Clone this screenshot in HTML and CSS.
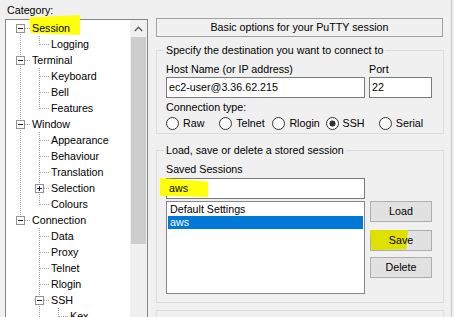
FILE: index.html
```html
<!DOCTYPE html>
<html lang="en">
<head>
  <meta charset="UTF-8">
  <title>PuTTY Configuration</title>
  <link rel="stylesheet" href="styles.css">
</head>
<body>
  <div class="dialog">
    <div class="category">
      <div class="cat-label">Category:</div>
      <div class="tree">
        <div class="tree-items">
          <div class="row"><span class="cell first"><span class="box minus"></span></span><span class="label over">Session</span></div>
          <div class="row"><span class="cell pipe"></span><span class="cell elbow"></span><span class="label">Logging</span></div>
          <div class="row"><span class="cell tee"><span class="box minus"></span></span><span class="label">Terminal</span></div>
          <div class="row"><span class="cell pipe"></span><span class="cell tee"></span><span class="label">Keyboard</span></div>
          <div class="row"><span class="cell pipe"></span><span class="cell tee"></span><span class="label">Bell</span></div>
          <div class="row"><span class="cell pipe"></span><span class="cell elbow"></span><span class="label">Features</span></div>
          <div class="row"><span class="cell tee"><span class="box minus"></span></span><span class="label">Window</span></div>
          <div class="row"><span class="cell pipe"></span><span class="cell tee"></span><span class="label">Appearance</span></div>
          <div class="row"><span class="cell pipe"></span><span class="cell tee"></span><span class="label">Behaviour</span></div>
          <div class="row"><span class="cell pipe"></span><span class="cell tee"></span><span class="label">Translation</span></div>
          <div class="row"><span class="cell pipe"></span><span class="cell tee"><span class="box plus"></span></span><span class="label">Selection</span></div>
          <div class="row"><span class="cell pipe"></span><span class="cell elbow"></span><span class="label">Colours</span></div>
          <div class="row"><span class="cell elbow"><span class="box minus"></span></span><span class="label">Connection</span></div>
          <div class="row"><span class="cell"></span><span class="cell tee"></span><span class="label">Data</span></div>
          <div class="row"><span class="cell"></span><span class="cell tee"></span><span class="label">Proxy</span></div>
          <div class="row"><span class="cell"></span><span class="cell tee"></span><span class="label">Telnet</span></div>
          <div class="row"><span class="cell"></span><span class="cell tee"></span><span class="label">Rlogin</span></div>
          <div class="row"><span class="cell"></span><span class="cell tee"><span class="box minus"></span></span><span class="label">SSH</span></div>
          <div class="row"><span class="cell"></span><span class="cell pipe"></span><span class="cell tee"></span><span class="label">Kex</span></div>
        </div>
        <div class="scrollbar">
          <div class="sb-up">
            <svg width="9" height="6" viewBox="0 0 9 6"><polyline points="0.8,5 4.5,1.3 8.2,5" fill="none" stroke="#606060" stroke-width="1.5"/></svg>
          </div>
          <div class="sb-thumb"></div>
        </div>
      </div>
    </div>

    <div class="panel">
      <div class="panel-title">Basic options for your PuTTY session</div>

      <div class="group">
        <div class="group-title">Specify the destination you want to connect to</div>
        <div class="host-row">
          <div class="host-col">
            <div class="lbl">Host Name (or IP address)</div>
            <div class="field">ec2-user@3.36.62.215</div>
          </div>
          <div class="port-col">
            <div class="lbl">Port</div>
            <div class="field">22</div>
          </div>
        </div>
        <div class="lbl conn-label">Connection type:</div>
        <div class="radios">
          <div class="radio"><span class="dot"></span>Raw</div>
          <div class="radio"><span class="dot"></span>Telnet</div>
          <div class="radio"><span class="dot"></span>Rlogin</div>
          <div class="radio"><span class="dot checked"></span>SSH</div>
          <div class="radio"><span class="dot"></span>Serial</div>
        </div>
      </div>

      <div class="group sessions">
        <div class="group-title">Load, save or delete a stored session</div>
        <div class="lbl saved-label">Saved Sessions</div>
        <div class="field saved-field"><span class="over">aws</span></div>
        <div class="session-row">
          <div class="listbox">
            <div class="list-item">Default Settings</div>
            <div class="list-item selected">aws</div>
          </div>
          <div class="buttons">
            <div class="btn">Load</div>
            <div class="btn save"><span class="over">Save</span></div>
            <div class="btn delete">Delete</div>
          </div>
        </div>
      </div>

      <div class="group last"></div>
    </div>

    <div class="frame-edge"></div>
  </div>

  <span class="marker mark-session"></span>
  <span class="marker mark-aws"></span>
  <span class="marker mark-save"></span>
</body>
</html>
```

FILE: styles.css
```css
body {
  margin: 0;
  position: relative;
  width: 454px;
  height: 317px;
  overflow: hidden;
  background-color: #f0f0f0;
  font-family: 'Liberation Sans', Arial, sans-serif;
  font-size: 10.7px;
  color: #000;
}
.dialog {
  display: flex;
  height: 317px;
  padding-left: 5px;
}
.category {
  width: 143px;
  flex: none;
}
.cat-label {
  padding: 3px 0 0 2px;
  line-height: 15px;
}
.tree {
  margin-top: 1px;
  height: 298px;
  border: 1px solid #828790;
  border-bottom: none;
  background-color: #fff;
  display: flex;
  box-sizing: border-box;
  overflow: hidden;
}
.tree-items {
  flex: 1;
  padding-left: 5px;
}
.row {
  display: flex;
  height: 16px;
}
.cell {
  --v: repeating-linear-gradient(to bottom, #a0a0a0 0 1px, transparent 1px 2px);
  --h: repeating-linear-gradient(to right, #a0a0a0 0 1px, transparent 1px 2px);
  width: 19px;
  height: 16px;
  flex: none;
  display: flex;
  justify-content: center;
  align-items: flex-start;
}
.pipe {
  background: var(--v) 9px 0 / 1px 16px no-repeat;
}
.tee {
  background: var(--v) 9px 0 / 1px 16px no-repeat, var(--h) 10px 8px / 9px 1px no-repeat;
}
.elbow {
  background: var(--v) 9px 0 / 1px 9px no-repeat, var(--h) 10px 8px / 9px 1px no-repeat;
}
.first {
  background: var(--v) 9px 8px / 1px 8px no-repeat, var(--h) 10px 8px / 9px 1px no-repeat;
}
.box {
  width: 9px;
  height: 9px;
  margin-top: 4px;
  box-sizing: border-box;
  border: 1px solid #919191;
  background-color: #fff;
}
.minus {
  background: linear-gradient(#1f1f3f, #1f1f3f) center / 5px 1px no-repeat, #fff;
}
.plus {
  background: linear-gradient(#1f1f3f, #1f1f3f) center / 5px 1px no-repeat,
              linear-gradient(#1f1f3f, #1f1f3f) center / 1px 5px no-repeat, #fff;
}
.label {
  padding: 0 2px;
  line-height: 16px;
  white-space: nowrap;
}
.scrollbar {
  width: 17px;
  flex: none;
  background-color: #f0f0f0;
}
.sb-up {
  height: 17px;
  display: flex;
  justify-content: center;
  align-items: center;
}
.sb-thumb {
  margin: 0 1px;
  height: 207px;
  background-color: #cdcdcd;
}

.panel {
  width: 288px;
  flex: none;
  margin-left: 8px;
  padding-top: 18px;
}
.panel-title {
  width: 287px;
  height: 19px;
  box-sizing: border-box;
  border: 1px solid #a0a0a0;
  text-align: center;
  line-height: 17px;
}
.group {
  margin-top: 13px;
  border: 1px solid #dcdcdc;
  padding: 0 11px 2px 9px;
}
.group-title {
  margin: -8px 0 0 -2px;
  padding: 0 2px;
  line-height: 15px;
  display: table;
  background-color: #f0f0f0;
}
.lbl {
  line-height: 15px;
}
.host-row {
  display: flex;
  gap: 4px;
  margin-top: 4px;
}
.host-col {
  width: 199px;
}
.port-col {
  width: 63px;
}
.field {
  height: 21px;
  box-sizing: border-box;
  border: 1px solid #7a7a7a;
  background-color: #fff;
  padding-left: 2px;
  line-height: 19px;
}
.conn-label {
  margin-top: 2px;
}
.radios {
  display: flex;
  height: 16px;
}
.radio {
  width: 54px;
  display: flex;
  align-items: center;
}
.dot {
  width: 13px;
  height: 13px;
  box-sizing: border-box;
  border: 1px solid #333;
  border-radius: 50%;
  background-color: #fff;
  margin-right: 4px;
}
.dot.checked {
  background: radial-gradient(circle, #333 0 2.8px, #fff 3.3px);
}
.sessions {
  margin-top: 16px;
  padding-bottom: 8px;
}
.saved-label {
  margin-top: 4px;
}
.saved-field {
  margin-top: 1px;
  width: 199px;
}
.session-row {
  display: flex;
  gap: 5px;
  margin-top: 2px;
}
.listbox {
  width: 199px;
  height: 93px;
  box-sizing: border-box;
  border: 1px solid #828790;
  background-color: #fff;
  padding: 1px;
}
.list-item {
  line-height: 13px;
  padding-left: 2px;
}
.list-item.selected {
  background-color: #0078d7;
  color: #fff;
}
.buttons {
  width: 62px;
}
.btn {
  height: 21px;
  box-sizing: border-box;
  border: 1px solid #adadad;
  background-color: #e1e1e1;
  text-align: center;
  line-height: 19px;
}
.save {
  margin-top: 8px;
}
.delete {
  margin-top: 6px;
}
.last {
  margin-top: 7px;
  height: 8px;
  border-bottom: none;
  padding-bottom: 0;
}
.frame-edge {
  margin-left: 7px;
  width: 3px;
  border-left: 1px solid #c8c8c8;
}

.over {
  position: relative;
  z-index: 2;
}
.marker {
  position: absolute;
  z-index: 1;
  background-color: #ffff0a;
}
.mark-session {
  left: 29px;
  top: 15px;
  width: 51px;
  height: 20px;
  clip-path: polygon(0 12%, 100% 0, 100% 100%, 3% 90%);
}
.mark-aws {
  left: 160px;
  top: 178px;
  width: 48px;
  height: 19px;
  clip-path: polygon(0 0, 100% 18%, 100% 100%, 0 94%);
}
.mark-save {
  left: 370px;
  top: 230px;
  width: 38px;
  height: 20px;
  background-color: #e0e000;
  clip-path: polygon(0 0, 100% 0, 96% 96%, 4% 100%);
}
```
